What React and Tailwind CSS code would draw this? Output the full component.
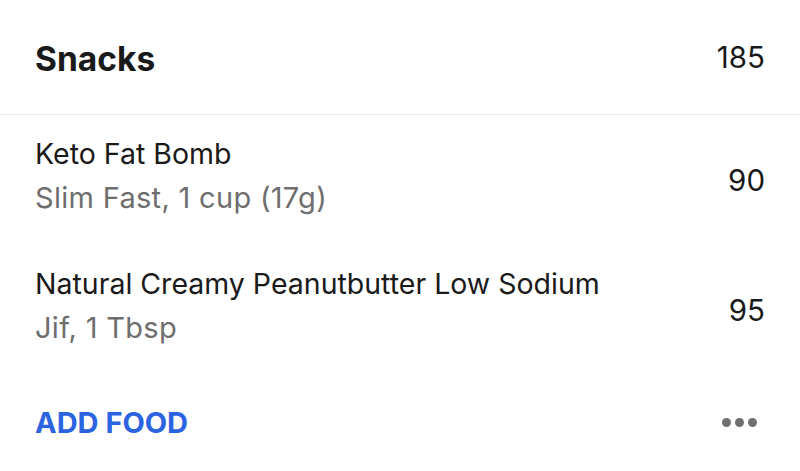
import React from "react";

const foods = [
  { name: "Keto Fat Bomb", detail: "Slim Fast, 1 cup (17g)", calories: 90 },
  { name: "Natural Creamy Peanutbutter Low Sodium", detail: "Jif, 1 Tbsp", calories: 95 },
];

const App = () => {
  const total = foods.reduce((sum, f) => sum + f.calories, 0);

  return (
    <div className="w-[800px] h-[471px] bg-white text-[#1a1a1a] font-['Inter',sans-serif]">
      {/* Meal header */}
      <div className="h-[115px] px-[35px] flex items-center justify-between border-b border-[#e8e8e8]">
        <h2 className="text-[33.5px] font-bold pt-[4px]">Snacks</h2>
        <span className="text-[29.5px]">{total}</span>
      </div>

      {/* Food entries */}
      {foods.map((food) => (
        <div key={food.name} className="h-[130px] px-[35px] flex items-center justify-between">
          <div className="flex flex-col pb-[8px]">
            <span className="text-[28.5px] leading-[44px]">{food.name}</span>
            <span className="text-[29px] leading-[44px] text-[#6e6e6e] tracking-[0.3px]">{food.detail}</span>
          </div>
          <span className="text-[29.5px]">{food.calories}</span>
        </div>
      ))}

      {/* Footer actions */}
      <div className="h-[95px] px-[35px] flex items-center justify-between">
        <button className="text-[29px] font-bold text-[#2c63e0]">ADD FOOD</button>
        <div className="flex items-center gap-[4px] mr-[8px]">
          <span className="w-[9px] h-[9px] rounded-full bg-[#707070]" />
          <span className="w-[9px] h-[9px] rounded-full bg-[#707070]" />
          <span className="w-[9px] h-[9px] rounded-full bg-[#707070]" />
        </div>
      </div>
    </div>
  );
};

export default App;
